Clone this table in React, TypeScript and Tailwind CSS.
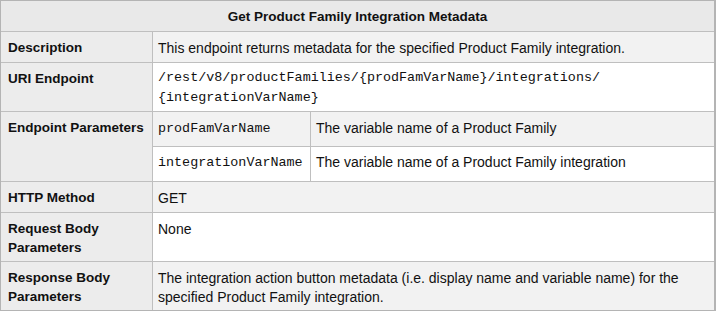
const sans = "font-['Liberation_Sans',Arial,sans-serif]"
const mono = "font-['Liberation_Mono','Courier_New',monospace]"

type RowProps = {
  label: React.ReactNode
  children: React.ReactNode
  height: string
  shaded?: boolean
}

function Row({ label, children, height, shaded }: RowProps) {
  return (
    <div className={`flex border-b border-[#bfbfbf] ${height}`}>
      <div className="w-[152px] shrink-0 border-r border-[#bfbfbf] bg-[#ececec] pl-[7px] pt-[7px] text-[13.5px] font-bold">
        {label}
      </div>
      <div className={`flex-1 pl-[5px] pt-[7px] ${shaded ? 'bg-[#f2f2f2]' : 'bg-white'}`}>
        {children}
      </div>
    </div>
  )
}

export default function App() {
  return (
    <div className={`w-[716px] h-[311px] bg-white text-[14px] leading-[18.5px] text-[#111] ${sans}`}>
      <div className="border-l border-t border-r-2 border-b border-[#b4b4b4] border-b-[#b4b4b4]">
        {/* header */}
        <div className="h-[31px] border-b border-[#bfbfbf] bg-[#e9e9e9] pt-[7px] text-center text-[13.5px] font-bold">
          Get Product Family Integration Metadata
        </div>

        <Row label="Description" height="h-[31px]" shaded>
          This endpoint returns metadata for the specified Product Family integration.
        </Row>

        <Row label="URI Endpoint" height="h-[49px]">
          <div className={`${mono} text-[13.4px] leading-[20px] -mt-[2px]`}>
            /rest/v8/productFamilies/{'{prodFamVarName}'}/integrations/
            <br />
            {'{integrationVarName}'}
          </div>
        </Row>

        {/* endpoint parameters */}
        <div className="flex border-b border-[#bfbfbf] h-[70px]">
          <div className="w-[152px] shrink-0 border-r border-[#bfbfbf] bg-[#ececec] pl-[7px] pt-[7px] text-[13.5px] font-bold">
            Endpoint Parameters
          </div>
          <div className="flex-1 flex flex-col">
            <div className="flex h-[35px] border-b border-[#bfbfbf] bg-[#f2f2f2]">
              <div className={`w-[158px] shrink-0 border-r border-[#bfbfbf] pl-[5px] pt-[8px] ${mono} text-[13.4px]`}>
                prodFamVarName
              </div>
              <div className="flex-1 pl-[5px] pt-[7px]">The variable name of a Product Family</div>
            </div>
            <div className="flex h-[34px] bg-white">
              <div className={`w-[158px] shrink-0 border-r border-[#bfbfbf] pl-[5px] pt-[7px] ${mono} text-[13.4px]`}>
                integrationVarName
              </div>
              <div className="flex-1 pl-[5px] pt-[6px]">The variable name of a Product Family integration</div>
            </div>
          </div>
        </div>

        <Row label="HTTP Method" height="h-[31px]" shaded>
          GET
        </Row>

        <Row label={<>Request Body<br />Parameters</>} height="h-[49px]">
          None
        </Row>

        <div className="flex h-[48px]">
          <div className="w-[152px] shrink-0 border-r border-[#bfbfbf] bg-[#ececec] pl-[7px] pt-[7px] text-[13.5px] font-bold">
            Response Body
            <br />
            Parameters
          </div>
          <div className="flex-1 pl-[5px] pt-[7px] bg-[#f2f2f2]">
            The integration action button metadata (i.e. display name and variable name) for the
            <br />
            specified Product Family integration.
          </div>
        </div>
      </div>
    </div>
  )
}
